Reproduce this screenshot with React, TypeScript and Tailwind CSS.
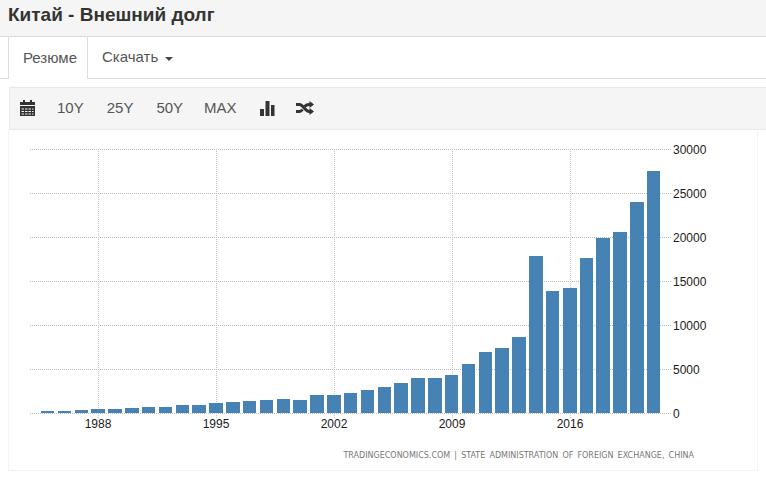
import React from "react";

const bars: [number, number, number][] = [
  [41,54,411],[58,71,411],[75,88,410],[91,105,409],[108,122,409],[125,139,408],[142,155,407],[159,172,407],
  [176,189,405],[192,206,405],[209,223,403],[226,240,402],[243,256,401],[260,273,400],[277,290,399],[293,307,400],
  [310,324,395],[327,341,395],[344,357,393],[361,374,390],[378,391,387],[394,408,383],[411,425,378],[428,442,378],
  [445,458,375],[462,475,364],[479,492,352],[495,509,348],[512,526,337],[529,543,256],[546,559,291],[563,577,288],
  [580,593,258],[596,610,238],[613,627,232],[630,644,202],[647,660,171],
];
const grid = [[149,"30000"],[193,"25000"],[237,"20000"],[281,"15000"],[325,"10000"],[369,"5000"],[413,"0"]] as const;
const xs = [[98,"1988"],[216,"1995"],[334,"2002"],[452,"2009"],[570,"2016"]] as const;
const OFF = 9; const TOP = 130;

function Chart() {
  return (
    <svg width="748" height="340" className="block">
      <g transform={`translate(${-OFF} ${-TOP})`}>
        {grid.map(([y]) => (
          <line key={y} x1="30" x2="671" y1={y + 0.5} y2={y + 0.5} stroke="#bdbdbd" strokeDasharray="1 1" />
        ))}
        {xs.map(([x]) => (
          <line key={x} x1={x + 0.5} x2={x + 0.5} y1="149" y2="418" stroke="#c4c4c4" strokeDasharray="1 1" />
        ))}
        {bars.map(([a, b, t]) => (
          <rect key={a} x={a} y={t} width={b - a} height={413 - t} fill="#4682b4" />
        ))}
        {grid.map(([y, s]) => (
          <text key={s} x="673" y={y + 4.5} fontSize="12" fill="#1a1a1a" fontFamily="'Liberation Sans', sans-serif">{s}</text>
        ))}
        {xs.map(([x, s]) => (
          <text key={s} x={x} y="428" fontSize="12" textAnchor="middle" fill="#1a1a1a" fontFamily="'Liberation Sans', sans-serif">{s}</text>
        ))}
        <text x="694" y="458" textAnchor="end" fontSize="8" wordSpacing="1.6" fill="#777" fontFamily="'DejaVu Sans', sans-serif">TRADINGECONOMICS.COM | STATE ADMINISTRATION OF FOREIGN EXCHANGE, CHINA</text>
      </g>
    </svg>
  );
}

function Cal() {
  return (
    <svg width="15" height="16" viewBox="0 0 15 16" fill="#333" className="block -mt-[1px]">
      <path d="M0 2h3V0h2V2h5V0h2V2h3v3H0z" />
      <path fillRule="evenodd" d="M0 6h15v10H0zM1.500 8.500v1h2.500v-1zm3.500 0v1h2.500v-1zm3.500 0v1h2.500v-1zm3.500 0v1h1.500v-1zM1.500 11v1h2.500v-1zm3.500 0v1h2.500v-1zm3.500 0v1h2.500v-1zm3.500 0v1h1.500v-1zM1.500 13.500v1h2.500v-1zm3.500 0v1h2.500v-1zm3.500 0v1h2.500v-1zm3.500 0v1h1.500v-1z" />
    </svg>
  );
}
function Stats() {
  return (
    <svg width="15" height="15" viewBox="0 0 15 15" fill="#333" className="block -mt-[1px]">
      <rect x="0" y="8" width="4" height="7" /><rect x="5.500" y="0" width="4" height="15" /><rect x="11" y="4" width="3.500" height="11" />
    </svg>
  );
}
function Shuffle() {
  return (
    <svg width="18" height="14" viewBox="0 0 18 14" fill="none" stroke="#333" strokeWidth="3" className="block -mt-[1px]">
      <path d="M0 3.500h3.500c3.500 0 6 7 9.500 7h1.500" />
      <path d="M0 10.500h3.500c1.300 0 2.300-1 3-2M8.500 5.500c1.300-1.200 2.800-2 4.500-2h1.500" />
      <path d="M13.500 0l4.500 3.500-4.500 3.500zM13.500 7l4.500 3.500-4.500 3.500z" fill="#333" stroke="none" />
    </svg>
  );
}

export default function App() {
  return (
    <div className="w-[766px] h-[479px] bg-white overflow-hidden font-['Liberation_Sans',Arial,sans-serif] text-[#333]">
      <div className="h-[37px] bg-[#f5f5f5] border-b border-[#dcdcdc] pl-2 pt-[4px]">
        <h1 className="text-[19px] leading-[22px] font-bold text-[#333]">Китай - Внешний долг</h1>
      </div>
      <div className="h-[42px] flex border-b border-[#ddd]">
        <div className="ml-2 w-[80px] h-[42px] bg-white border-x border-[#ddd] flex items-center pl-[14px] text-[15px] text-[#555]">Резюме</div>
        <div className="ml-[14px] h-[41px] flex items-center text-[15px] text-[#555]">
          Скачать
          <span className="ml-[7px] mt-[2px] w-0 h-0 border-x-[4px] border-x-transparent border-t-[4px] border-t-[#444]" />
        </div>
      </div>
      <div className="mt-2 ml-[9px] h-[43px] bg-[#f5f5f5] border border-[#e7e7e7] border-r-0 flex items-center text-[15px] text-[#555] pl-[10px]">
        <Cal />
        <span className="ml-[22px]">10Y</span>
        <span className="ml-[23px]">25Y</span>
        <span className="ml-[23px]">50Y</span>
        <span className="ml-[21px]">MAX</span>
        <span className="ml-[23px]"><Stats /></span>
        <span className="ml-[21px]"><Shuffle /></span>
      </div>
      <div className="ml-2 w-[750px] h-[341px] border-x border-b border-[#f3f3f3]">
        <Chart />
      </div>
    </div>
  );
}
